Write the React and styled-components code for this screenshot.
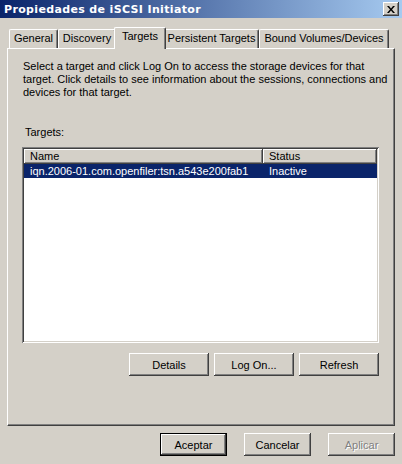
import React from "react"
import styled, { createGlobalStyle } from "styled-components"

const GlobalStyle = createGlobalStyle`
  html, body {
    margin: 0;
    padding: 0;
    background: #d4d0c8;
  }
  body {
    font-family: "Liberation Sans", Arial, sans-serif;
    font-size: 11px;
    color: #000;
  }
`

const raised = `
  box-shadow: inset -1px -1px #404040, inset 1px 1px #ffffff,
    inset -2px -2px #808080, inset 2px 2px #d4d0c8;
`

const Window = styled.div`
  width: 402px;
  height: 464px;
  background: #d4d0c8;
  display: flex;
  flex-direction: column;
  overflow: hidden;
`

const TitleBar = styled.div`
  height: 18px;
  flex: none;
  display: flex;
  align-items: center;
  justify-content: space-between;
  padding: 0 3px 0 4px;
  background: linear-gradient(to right, #0a246a, #a6caf0);
`

const Caption = styled.span`
  color: #fff;
  font-family: "DejaVu Sans", Tahoma, sans-serif;
  font-weight: bold;
  font-size: 11px;
  letter-spacing: 0.35px;
  white-space: nowrap;
`

const CloseButton = styled.div`
  width: 16px;
  height: 14px;
  background: #d4d0c8;
  display: flex;
  align-items: center;
  justify-content: center;
  ${raised}
`

const Tabs = styled.div`
  height: 21px;
  margin-top: 9px;
  padding-left: 9px;
  display: flex;
  align-items: flex-end;
  flex: none;
`

const Tab = styled.div`
  position: relative;
  box-sizing: border-box;
  width: ${p => p.$w}px;
  height: ${p => (p.$active ? 22 : 19)}px;
  margin: 0 ${p => (p.$active ? -2 : 0)}px ${p => (p.$active ? -1 : 0)}px;
  z-index: ${p => (p.$active ? 2 : 1)};
  background: #d4d0c8;
  border-top: 1px solid #fff;
  border-left: 1px solid #fff;
  border-right: 1px solid #404040;
  border-radius: 2px 2px 0 0;
  box-shadow: inset -1px 0 #808080;
  display: flex;
  justify-content: center;
  padding-top: 2px;
  white-space: nowrap;
`

const Panel = styled.div`
  box-sizing: border-box;
  width: 388px;
  height: 378px;
  margin-left: 7px;
  flex: none;
  border-top: 1px solid #fff;
  border-left: 1px solid #fff;
  border-right: 1px solid #404040;
  border-bottom: 1px solid #404040;
  box-shadow: inset -1px -1px #808080;
  padding: 11px 0 0 15px;
  display: flex;
  flex-direction: column;
`

const Intro = styled.p`
  margin: 0;
  line-height: 13px;
  white-space: nowrap;
`

const Label = styled.div`
  margin: 27px 0 0 2px;
  line-height: 13px;
`

const ListBox = styled.div`
  box-sizing: border-box;
  width: 357px;
  height: 196px;
  margin: 8px 0 0 -1px;
  background: #fff;
  padding: 2px;
  box-shadow: inset 1px 1px #808080, inset -1px -1px #ffffff,
    inset 2px 2px #404040, inset -2px -2px #d4d0c8;
`

const Row = styled.div`
  display: grid;
  grid-template-columns: 239px 1fr;
  height: ${p => (p.$head ? 15 : 14)}px;
  background: ${p => (p.$selected ? "#0a246a" : "transparent")};
  color: ${p => (p.$selected ? "#fff" : "#000")};
`

const HeadCell = styled.div`
  box-sizing: border-box;
  background: #d4d0c8;
  padding-left: 6px;
  line-height: 14px;
  ${raised}
`

const Cell = styled.div`
  padding-left: 6px;
  line-height: 14px;
  white-space: nowrap;
`

const ButtonRow = styled.div`
  display: flex;
  justify-content: flex-end;
  gap: ${p => p.$gap}px;
  width: ${p => (p.$w ? `${p.$w}px` : "auto")};
  margin: ${p => p.$margin};
`

const Button = styled.div`
  box-sizing: border-box;
  width: ${p => p.$w}px;
  height: 23px;
  background: #d4d0c8;
  display: flex;
  align-items: center;
  justify-content: center;
  color: ${p => (p.$disabled ? "#808080" : "#000")};
  text-shadow: ${p => (p.$disabled ? "1px 1px #fff" : "none")};
  ${p =>
    p.$default
      ? `border: 1px solid #000;
         box-shadow: inset -1px -1px #404040, inset 1px 1px #ffffff,
           inset -2px -2px #808080, inset 2px 2px #d4d0c8;`
      : raised}
`

const CloseGlyph = () => (
  <svg width="8" height="7" viewBox="0 0 8 7">
    <path d="M0 0h2l2 2.5L6 0h2L5 3.5 8 7H6L4 4.5 2 7H0l3-3.5z" fill="#000" />
  </svg>
)

export default function App() {
  return (
    <>
      <GlobalStyle />
      <Window>
        <TitleBar>
          <Caption>Propiedades de iSCSI Initiator</Caption>
          <CloseButton>
            <CloseGlyph />
          </CloseButton>
        </TitleBar>

        <Tabs>
          <Tab $w={49}>General</Tab>
          <Tab $w={58}>Discovery</Tab>
          <Tab $w={52} $active>Targets</Tab>
          <Tab $w={95}>Persistent Targets</Tab>
          <Tab $w={130}>Bound Volumes/Devices</Tab>
        </Tabs>

        <Panel>
          <Intro>
            Select a target and click Log On to access the storage devices for that
            <br />
            target. Click details to see information about the sessions, connections and
            <br />
            devices for that target.
          </Intro>
          <Label>Targets:</Label>
          <ListBox>
            <Row $head>
              <HeadCell>Name</HeadCell>
              <HeadCell>Status</HeadCell>
            </Row>
            <Row $selected>
              <Cell>iqn.2006-01.com.openfiler:tsn.a543e200fab1</Cell>
              <Cell>Inactive</Cell>
            </Row>
          </ListBox>
          <ButtonRow $gap={5} $w={356} $margin="10px 0 0 0">
            <Button $w={80}>Details</Button>
            <Button $w={80}>Log On...</Button>
            <Button $w={80}>Refresh</Button>
          </ButtonRow>
        </Panel>

        <ButtonRow $gap={17} $margin="7px 7px 0 0">
          <Button $w={67} $default>Aceptar</Button>
          <Button $w={67}>Cancelar</Button>
          <Button $w={67} $disabled>Aplicar</Button>
        </ButtonRow>
      </Window>
    </>
  )
}
